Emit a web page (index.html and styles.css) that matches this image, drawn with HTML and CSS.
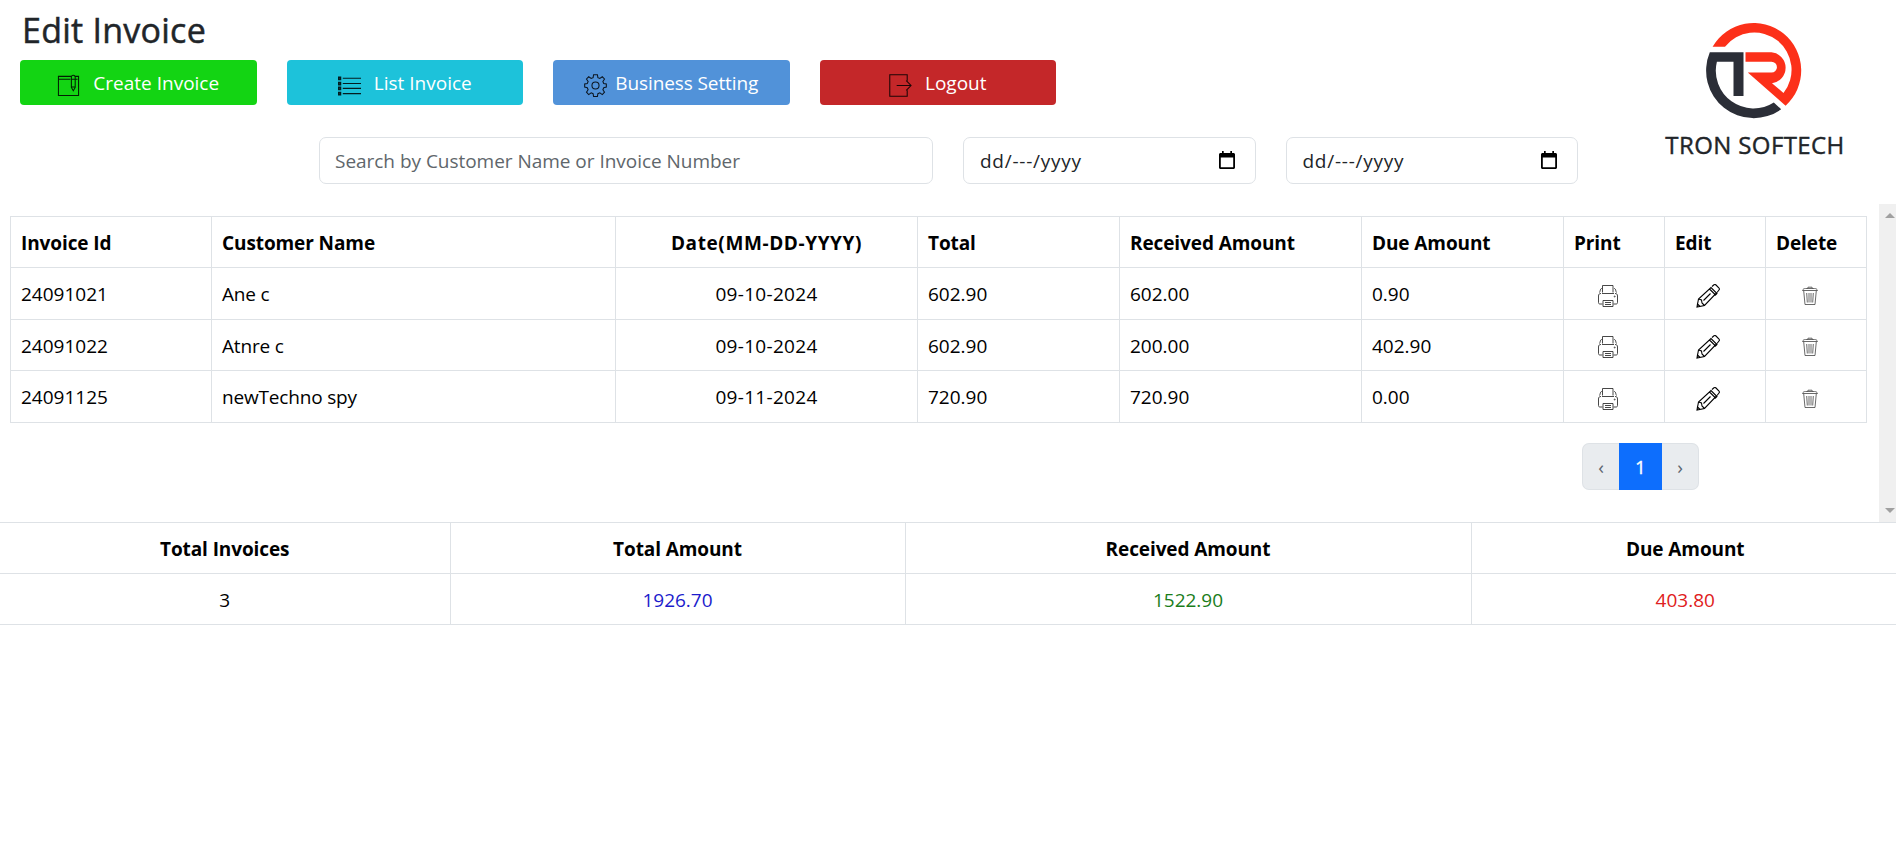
FILE: index.html
```html
<!DOCTYPE html>
<html lang="en">
<head>
<meta charset="utf-8">
<title>Edit Invoice</title>
<link rel="stylesheet" href="styles.css">
</head>
<body>
<svg class="sprite" aria-hidden="true">
  <symbol id="printer" viewBox="0 0 22 24">
    <path d="M5.500 8.500V1.500H16v7M5 4.500H4.500C3 5 3.500 7 2.500 8.500M17 4.500h.5C19 5 18.500 7 19.500 8.500M4 9.500C2.500 9.500 1.500 10 1.500 12v6.500c0 1 .5 1.500 1.500 1.500h2.500M18 9.500c1.500 0 2.500.5 2.500 2.500v6.500c0 1-.5 1.500-1.500 1.500h-2.500M5 9.500h12M6 22.500V16.500h10v6zM8 18.500h6M8 20.500h6"/>
    <circle cx="17.700" cy="12.500" r=".5"/>
  </symbol>
  <symbol id="pencil" viewBox="0 0 24 24">
    <path d="M1 23l1.500-8L15 3.500 20.500 9 8.500 21.500zM2.500 15l3 1 .5 3 2.500 2.500M7.500 16.500L14.500 9.500M13.500 5l6 6 1.500-1.500-6-6zM16 2.500L18 .800c.8-.5 1.500-.3 2 .2l3 3c.6.700.6 1.300 0 2l-2 2.500M1 23l.5-3 2.500 2.500z"/>
  </symbol>
  <symbol id="trash" viewBox="0 0 18 20">
    <path d="M1.500 4.500C2 3 3 2.500 4.500 2.500h9c1.500 0 2.500.5 3 2zM6.500 2.500l.5-1.300h4l.5 1.300M2.700 4.700L4 18.500h10l1.300-13.800M5.700 7l.6 9.500M8 7v9.500M10 7v9.500M12.300 7l-.6 9.500"/>
  </symbol>
  <symbol id="calendar" viewBox="0 0 16 18">
    <path d="M14.500 2H13V0h-1.700v2H4.700V0H3v2H1.500C.7 2 0 2.700 0 3.500v13c0 .8.700 1.500 1.500 1.500h13c.8 0 1.500-.7 1.500-1.500v-13c0-.8-.7-1.500-1.500-1.500zm-.3 14.300H1.800V6.500h12.400z"/>
  </symbol>
</svg>

<header class="header">
  <div class="toolbar">
    <h1 class="title">Edit Invoice</h1>
    <nav class="actions">
      <a class="btn btn-create">
        <svg class="btn-icon" viewBox="0 0 24 24"><path d="M15 2.500H1.500v20h21v-20H19M1.500 5.500H14M19 5.500h2.500M15 3.500c0-3 4-3 4 0V14l-2 3.500-2-3.500zM15 5.500h4M15 13.500h4"/></svg>
        <span>Create Invoice</span>
      </a>
      <a class="btn btn-list">
        <svg class="btn-icon" viewBox="0 0 24 24"><path d="M5 4.500h19M5 10h19M5 15h19M5 20.500h19"/><path class="bullets" d="M.8 3.300h1.800v2.400H.8zM.8 8.800h1.800v2.400H.8zM.8 13.800h1.800v2.400H.8zM.8 19.300h1.800v2.400H.8z"/></svg>
        <span>List Invoice</span>
      </a>
      <a class="btn btn-setting">
        <svg class="btn-icon" viewBox="0 0 24 24"><path d="M10 .8h4l.5 3 2 .9 2.600-1.800 2.300 2.300-1.700 2.600.9 2.200 2.700.5v3.200l-2.700.6-.9 2.200 1.700 2.500-2.300 2.500-2.600-1.800-2 .8-.5 2.900h-4l-.5-2.900-2-.8-2.600 1.800-2.300-2.500 1.700-2.500-.9-2.200-2.700-.6v-3.200L3.400 10l.9-2.200-1.700-2.600 2.300-2.300 2.600 1.800 2-.9z"/><circle cx="12" cy="12" r="3.700"/></svg>
        <span>Business Setting</span>
      </a>
      <a class="btn btn-logout">
        <svg class="btn-icon" viewBox="0 0 24 24"><path d="M19 7V.8H.8v22.400H19V17M8 12h15M18 7l5 5-5 5"/></svg>
        <span>Logout</span>
      </a>
    </nav>
    <div class="filters">
      <div class="field placeholder"><span>Search by Customer Name or Invoice Number</span></div>
      <div class="field"><span class="date">dd/---/yyyy</span><svg class="calendar"><use href="#calendar"/></svg></div>
      <div class="field"><span class="date">dd/---/yyyy</span><svg class="calendar"><use href="#calendar"/></svg></div>
    </div>
  </div>
  <div class="brand">
    <svg class="logo" viewBox="0 0 96 96">
      <path class="logo-red" d="M6.600 23.700A47.500 47.500 0 1 1 79.600 82.700L41.800 49.600H65.500a5.400 5.400 0 0 0 0-10.900H39.500V29.300H65.500A15.600 15.600 0 0 1 66 60.300L77.500 70A37.300 37.300 0 0 0 19 23.700z"/>
      <path class="logo-dark" d="M3.800 29.300H37.500V73H27.500V38.700H10.900A37.700 37.700 0 0 0 67.800 79.500L75.200 86.300A47.500 47.500 0 0 1 3.800 29.300z"/>
    </svg>
    <div class="brand-name">TRON SOFTECH</div>
  </div>
</header>

<main>
  <section class="list">
    <div class="list-body">
      <table class="invoices">
        <colgroup><col class="c-id"><col class="c-name"><col class="c-date"><col class="c-total"><col class="c-received"><col class="c-due"><col class="c-act"><col class="c-act"><col class="c-act"></colgroup>
        <thead>
          <tr><th>Invoice Id</th><th>Customer Name</th><th class="center">Date(MM-DD-YYYY)</th><th>Total</th><th>Received Amount</th><th>Due Amount</th><th>Print</th><th>Edit</th><th>Delete</th></tr>
        </thead>
        <tbody>
          <tr><td>24091021</td><td class="name">Ane c</td><td class="center">09-10-2024</td><td>602.90</td><td>602.00</td><td>0.90</td><td class="act"><svg class="i-print"><use href="#printer"/></svg></td><td class="act"><svg class="i-edit"><use href="#pencil"/></svg></td><td class="act"><svg class="i-trash"><use href="#trash"/></svg></td></tr>
          <tr><td>24091022</td><td class="name">Atnre c</td><td class="center">09-10-2024</td><td>602.90</td><td>200.00</td><td>402.90</td><td class="act"><svg class="i-print"><use href="#printer"/></svg></td><td class="act"><svg class="i-edit"><use href="#pencil"/></svg></td><td class="act"><svg class="i-trash"><use href="#trash"/></svg></td></tr>
          <tr><td>24091125</td><td class="name">newTechno spy</td><td class="center">09-11-2024</td><td>720.90</td><td>720.90</td><td>0.00</td><td class="act"><svg class="i-print"><use href="#printer"/></svg></td><td class="act"><svg class="i-edit"><use href="#pencil"/></svg></td><td class="act"><svg class="i-trash"><use href="#trash"/></svg></td></tr>
        </tbody>
      </table>
      <div class="pagination"><span class="page prev">‹</span><span class="page active">1</span><span class="page next">›</span></div>
    </div>
    <div class="scrollbar"><i class="arrow-up"></i><i class="arrow-down"></i></div>
  </section>
  <table class="summary">
    <colgroup><col class="s-count"><col class="s-total"><col class="s-received"><col></colgroup>
    <thead><tr><th>Total Invoices</th><th>Total Amount</th><th>Received Amount</th><th>Due Amount</th></tr></thead>
    <tbody><tr><td>3</td><td class="blue">1926.70</td><td class="green">1522.90</td><td class="red">403.80</td></tr></tbody>
  </table>
</main>
</body>
</html>
```
FILE: styles.css
```css
* { box-sizing: border-box; }
body {
  margin: 0;
  background: #fff;
  color: #212529;
  font: 19px/30px "Open Sans", "Noto Sans", sans-serif;
  overflow: hidden;
}
svg { display: block; }
.sprite { display: none; }

.header { display: flex; height: 204px; }
.toolbar { width: 1613px; }
.title {
  margin: 0;
  height: 60px;
  padding: 9px 0 0 22px;
  font-size: 34px;
  line-height: 42px;
  font-weight: 500;
  letter-spacing: 0.25px;
  -webkit-text-stroke: 0.5px #212529;
}
.actions {
  display: grid;
  grid-template-columns: repeat(4, 236.5px);
  gap: 30px;
  padding-left: 20px;
}
.btn {
  display: flex;
  align-items: center;
  justify-content: center;
  gap: 13px;
  height: 45px;
  border-radius: 4px;
  color: #fff;
}
.btn-create { background: #13d413; }
.btn-list { background: #1dc2da; }
.btn-setting { background: #5192d9; gap: 8px; letter-spacing: -0.1px; }
.btn-logout { background: #c42729; }
.btn-icon {
  width: 23px;
  height: 23px;
  margin-top: 5px;
  fill: none;
  stroke: #000;
  stroke-width: 1.1;
  opacity: .85;
}
.bullets { stroke-width: 1.6; }

.filters {
  display: grid;
  grid-template-columns: 614px 292.5px 292.5px;
  gap: 30px;
  margin-top: 32px;
  padding-left: 319px;
}
.field {
  display: flex;
  align-items: center;
  justify-content: space-between;
  height: 47px;
  padding: 0 20px 0 16px;
  border: 1px solid #dee2e6;
  border-radius: 7px;
}
.placeholder { padding-left: 15px; color: #60666b; letter-spacing: -0.03px; }
.date { letter-spacing: 0.75px; }
.calendar { width: 16px; height: 18px; margin-bottom: 2px; fill: #000; }

.brand { width: 283px; padding-top: 23px; text-align: center; }
.logo { width: 96px; height: 96px; margin: 0 0 0 93px; overflow: visible; }
.logo-red { fill: #fc3019; }
.logo-dark { fill: #2b2e37; }
.brand-name {
  margin-top: 8px;
  padding-left: 1px;
  font-size: 24px;
  line-height: 36px;
  font-weight: 500;
  letter-spacing: 0.4px;
  -webkit-text-stroke: 0.4px #212529;
}

.list { display: flex; height: 318px; }
.list-body { width: 1879px; padding: 12px 0 0 10px; }
table { border-collapse: collapse; table-layout: fixed; color: #000; }
th { font-weight: 700; text-align: left; letter-spacing: -0.1px; }
th, td { height: 51px; padding: 1px 10px 0; border: 1px solid #dee2e6; }
.invoices { width: 1857px; }
.invoices tbody tr:nth-child(odd) td { height: 52px; }
.c-id { width: 201px; }
.c-name { width: 404px; }
.c-date { width: 302px; }
.c-total { width: 202px; }
.c-received { width: 242px; }
.c-due { width: 202px; }
.c-act { width: 101px; }
.name { letter-spacing: -0.18px; }
td.center { text-align: center; letter-spacing: 0.3px; }
th.center { text-align: center; letter-spacing: 0.6px; }
.act { padding: 4px 0 0; }
.act svg { fill: none; stroke-width: .9; }
.act .i-print { width: 22px; height: 24px; margin-left: 33px; stroke: #333; }
.act .i-edit { width: 24px; height: 24px; margin-left: 31px; stroke: #000; stroke-width: 1.1; }
.act .i-trash { width: 18px; height: 20px; margin-left: 35px; stroke: #444; stroke-width: .8; }

.pagination { display: flex; width: 117px; height: 47px; margin: 20px 0 0 1572px; }
.page {
  flex: 1;
  display: flex;
  align-items: center;
  justify-content: center;
  background: #e9ecef;
  border: 1px solid #dee2e6;
  color: #5c6570;
}
.prev { border-right: 0; border-radius: 7px 0 0 7px; }
.next { border-left: 0; border-radius: 0 7px 7px 0; }
.active { flex: 0 0 43px; background: #0d6efd; border-color: #0d6efd; color: #fff; -webkit-text-stroke: 0.3px #fff; }

.scrollbar {
  display: flex;
  flex-direction: column;
  justify-content: space-between;
  width: 17px;
  padding: 9px 0 9px 6px;
  background: #f0f0f0;
}
.arrow-up, .arrow-down { width: 0; border: 5px solid transparent; }
.arrow-up { border-top: 0; border-bottom-color: #a0a0a0; }
.arrow-down { border-bottom: 0; border-top-color: #a0a0a0; }

.summary { width: 1896px; }
.summary th, .summary td { text-align: center; }
.summary th:first-child, .summary td:first-child { border-left: 0; }
.summary th:last-child, .summary td:last-child { padding-left: 13px; border-right: 0; }
.s-count { width: 450px; }
.s-total { width: 455px; }
.s-received { width: 566px; }
.summary .blue { color: #1c1ccc; }
.summary .green { color: #1a7d1a; }
.summary .red { color: #e02020; }
```
